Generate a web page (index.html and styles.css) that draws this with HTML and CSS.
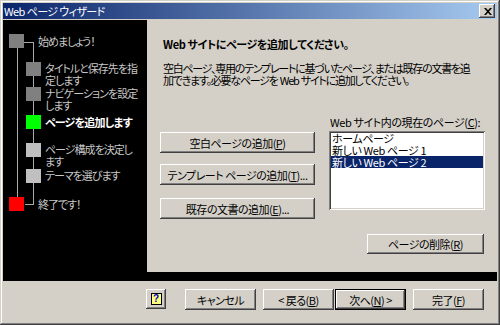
FILE: index.html
```html
<!DOCTYPE html>
<html lang="ja">
<head>
<meta charset="utf-8">
<title>Web ページ ウィザード</title>
<link rel="stylesheet" href="styles.css">
</head>
<body>
<div class="window">
  <div class="titlebar">
    <span class="title">Web ページ ウィザード</span>
    <span class="close-btn"><svg width="8" height="7" viewBox="0 0 8 7"><path d="M0 0h2l2 2.2L6 0h2L5 3.5 8 7H6L4 4.8 2 7H0l3-3.5z" fill="#000"/></svg></span>
  </div>
  <div class="body">
    <div class="steps">
      <div class="line line-a"></div>
      <div class="line line-b"></div>
      <div class="line line-c"></div>
      <div class="line line-d"></div>
      <ol class="step-list">
        <li class="step main"><span class="box dim"></span><span class="label">始めましょう！</span></li>
        <li class="step sub"><span class="box dim"></span><span class="label">タイトルと保存先を指<br>定します</span></li>
        <li class="step sub"><span class="box dim"></span><span class="label">ナビゲーションを設定<br>します</span></li>
        <li class="step sub current"><span class="box green"></span><span class="label">ページを追加します</span></li>
        <li class="step sub"><span class="box light"></span><span class="label">ページ構成を決定し<br>ます</span></li>
        <li class="step sub"><span class="box light"></span><span class="label">テーマを選びます</span></li>
        <li class="step main"><span class="box red"></span><span class="label">終了です！</span></li>
      </ol>
    </div>
    <div class="content">
      <h1 class="heading">Web サイトにページを追加してください。</h1>
      <p class="desc">空白ページ、専用のテンプレートに基づいたページ、または既存の文書を追<br>加できます。必要なページを Web サイトに追加してください。</p>
      <div class="panes">
        <div class="add-col">
          <button class="btn add-btn">空白ページの追加(<u>P</u>)</button>
          <button class="btn add-btn second">テンプレート ページの追加(<u>T</u>)...</button>
          <button class="btn add-btn third">既存の文書の追加(<u>E</u>)...</button>
        </div>
        <div class="list-col">
          <div class="list-label">Web サイト内の現在のページ(<u>C</u>):</div>
          <ul class="listbox">
            <li class="item">ホームページ</li>
            <li class="item">新しい Web ページ 1</li>
            <li class="item selected">新しい Web ページ 2</li>
          </ul>
          <button class="btn delete-btn">ページの削除(<u>R</u>)</button>
        </div>
      </div>
    </div>
  </div>
  <div class="footer">
    <button class="btn help-btn"><span class="help-icon">?</span></button>
    <button class="btn nav-btn">キャンセル</button>
    <button class="btn nav-btn back">&lt; 戻る(<u>B</u>)</button>
    <button class="btn nav-btn default">次へ(<u>N</u>) &gt;</button>
    <button class="btn nav-btn finish">完了(<u>F</u>)</button>
  </div>
</div>
</body>
</html>
```

FILE: styles.css
```css
* { box-sizing: border-box; }
html, body { margin: 0; padding: 0; }
body {
  width: 500px;
  height: 325px;
  overflow: hidden;
  font-family: "Noto Sans CJK JP", sans-serif;
  font-size: 11px;
  font-feature-settings: "palt";
  color: #000;
  background: #d4d0c8;
}
.window {
  width: 500px;
  height: 325px;
  padding: 3px;
  background: #d4d0c8;
  box-shadow: inset -1px -1px #404040, inset 1px 1px #d4d0c8, inset -2px -2px #808080, inset 2px 2px #fff;
  display: flex;
  flex-direction: column;
}
.titlebar {
  height: 16px;
  margin-bottom: 1px;
  background: linear-gradient(to right, #0a246a, #a6caf0);
  display: flex;
  align-items: center;
  justify-content: space-between;
  padding: 0 2px 0 1px;
}
.title {
  color: #fff;
  font-size: 11px;
  line-height: 14px;
  letter-spacing: -0.6px;
}
.close-btn {
  width: 16px;
  height: 14px;
  background: #d4d0c8;
  box-shadow: inset -1px -1px #404040, inset 1px 1px #fff, inset -2px -2px #808080;
  display: flex;
  align-items: center;
  justify-content: center;
  padding-left: 1px;
}
.close-btn svg { display: block; }
.body {
  height: 261px;
  background: #000;
  display: flex;
  align-items: flex-start;
}
.steps {
  position: relative;
  width: 144px;
  height: 261px;
}
.line {
  position: absolute;
  background: #a8a8a8;
}
.line-a { left: 14px; top: 28px; width: 1px; height: 149px; }
.line-b { left: 21px; top: 22px; width: 10px; height: 1px; }
.line-c { left: 30px; top: 22px; width: 1px; height: 163px; }
.line-d { left: 22px; top: 184px; width: 9px; height: 1px; }
.step-list {
  position: relative;
  list-style: none;
  margin: 0;
  padding: 14px 0 0 0;
  display: grid;
  grid-template-rows: 28px 25px 28px 28px 26px 28px 14px;
}
.step {
  display: flex;
  align-items: flex-start;
  color: #c8c8c8;
  line-height: 12px;
  white-space: nowrap;
}
.box {
  flex: none;
  width: 15px;
  height: 14px;
}
.label { letter-spacing: -1px; }
.main .box { margin-left: 6px; }
.main .label { margin-left: 14px; padding-top: 1px; }
.sub .box { margin-left: 23px; }
.sub .label { margin-left: 4px; }
.current .label { color: #fff; font-weight: bold; padding-top: 1px; letter-spacing: -0.8px; }
.dim { background: #808080; }
.light { background: #c0c0c0; }
.green { background: #00ff00; }
.red { background: #ff0000; }
.content {
  width: 350px;
  height: 252px;
  background: #d4d0c8;
  padding: 17px 12px 0 13px;
}
.heading {
  margin: 0 0 0 3px;
  font-size: 11px;
  font-weight: bold;
  line-height: 14px;
  letter-spacing: -0.4px;
  white-space: nowrap;
}
.desc {
  margin: 11px 0 0 3px;
  line-height: 12px;
  letter-spacing: -1.25px;
  word-spacing: 1px;
  white-space: nowrap;
}
.panes {
  margin-top: 30px;
  display: grid;
  grid-template-columns: 155px 156px;
  column-gap: 14px;
}
.add-col {
  padding-top: 16px;
  display: flex;
  flex-direction: column;
}
.btn {
  font-family: inherit;
  font-size: 11px;
  font-feature-settings: "palt";
  letter-spacing: -0.5px;
  color: #000;
  background: #d4d0c8;
  border: none;
  margin: 0;
  padding: 0;
  height: 21px;
  line-height: 12px;
  white-space: nowrap;
  box-shadow: inset -1px -1px #404040, inset 1px 1px #fff, inset -2px -2px #808080, inset 2px 2px #d4d0c8;
  display: flex;
  align-items: center;
  justify-content: center;
}
.btn u { text-underline-offset: 1px; }
.add-btn { width: 155px; }
.add-btn.second { margin-top: 11px; }
.add-btn.third { margin-top: 13px; }
.list-col {
  display: flex;
  flex-direction: column;
}
.list-label {
  line-height: 12px;
  margin-left: 1px;
  margin-bottom: 3px;
  letter-spacing: -0.4px;
  white-space: nowrap;
}
.listbox {
  list-style: none;
  margin: 0;
  height: 79px;
  padding: 1px 2px 2px 2px;
  background: #fff;
  box-shadow: inset 1px 1px #808080, inset -1px -1px #fff, inset 2px 2px #404040, inset -2px -2px #d4d0c8;
}
.item {
  line-height: 12px;
  padding-left: 1px;
  letter-spacing: -0.4px;
  white-space: nowrap;
}
.item.selected {
  background: #0a246a;
  color: #fff;
}
.delete-btn {
  width: 117px;
  height: 20px;
  margin-top: 24px;
  align-self: flex-end;
  margin-right: 1px;
}
.footer {
  height: 41px;
  display: flex;
  justify-content: flex-end;
  align-items: flex-start;
  padding: 8px 13px 0 0;
}
.help-btn {
  width: 20px;
  height: 20px;
  margin-right: 19px;
}
.help-icon {
  display: block;
  width: 11px;
  height: 12px;
  background: #ffff80;
  border: 1px solid #000;
  color: #0000c0;
  font-family: "Liberation Sans", sans-serif;
  font-weight: bold;
  font-size: 10px;
  line-height: 10px;
  letter-spacing: 0;
  text-align: center;
}
.nav-btn { width: 71px; }
.nav-btn.back { margin-left: 7px; }
.nav-btn.default {
  margin-left: 1px;
  box-shadow: inset 0 0 0 1px #000, inset -2px -2px #404040, inset 2px 2px #fff, inset -3px -3px #808080;
}
.nav-btn.finish { margin-left: 7px; }
```
